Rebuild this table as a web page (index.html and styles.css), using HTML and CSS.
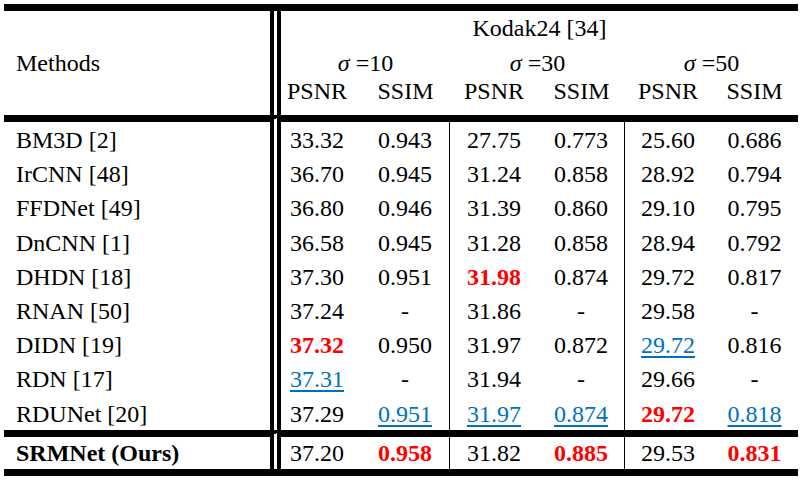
FILE: index.html
```html
<!DOCTYPE html>
<html lang="en">
<head>
<meta charset="utf-8">
<title>Kodak24 results</title>
<link rel="stylesheet" href="styles.css">
</head>
<body>
<table class="results">
  <colgroup>
    <col class="c-method">
    <col class="c-p1">
    <col class="c-s1">
    <col class="c-p2">
    <col class="c-s2">
    <col class="c-p3">
    <col class="c-s3">
  </colgroup>
  <thead>
    <tr class="h-dataset">
      <th class="method-head" rowspan="3">Methods</th>
      <th colspan="6">Kodak24 [34]</th>
    </tr>
    <tr class="h-sigma">
      <th colspan="2"><i>σ</i> =10</th>
      <th colspan="2"><i>σ</i> =30</th>
      <th colspan="2"><i>σ</i> =50</th>
    </tr>
    <tr class="h-metric">
      <th>PSNR</th><th>SSIM</th><th>PSNR</th><th>SSIM</th><th>PSNR</th><th>SSIM</th>
    </tr>
  </thead>
  <tbody>
    <tr class="first">
      <td class="name">BM3D [2]</td><td>33.32</td><td class="sep">0.943</td><td>27.75</td><td class="sep">0.773</td><td>25.60</td><td>0.686</td>
    </tr>
    <tr>
      <td class="name">IrCNN [48]</td><td>36.70</td><td class="sep">0.945</td><td>31.24</td><td class="sep">0.858</td><td>28.92</td><td>0.794</td>
    </tr>
    <tr>
      <td class="name">FFDNet [49]</td><td>36.80</td><td class="sep">0.946</td><td>31.39</td><td class="sep">0.860</td><td>29.10</td><td>0.795</td>
    </tr>
    <tr>
      <td class="name">DnCNN [1]</td><td>36.58</td><td class="sep">0.945</td><td>31.28</td><td class="sep">0.858</td><td>28.94</td><td>0.792</td>
    </tr>
    <tr>
      <td class="name">DHDN [18]</td><td>37.30</td><td class="sep">0.951</td><td><span class="best">31.98</span></td><td class="sep">0.874</td><td>29.72</td><td>0.817</td>
    </tr>
    <tr>
      <td class="name">RNAN [50]</td><td>37.24</td><td class="sep">-</td><td>31.86</td><td class="sep">-</td><td>29.58</td><td>-</td>
    </tr>
    <tr>
      <td class="name">DIDN [19]</td><td><span class="best">37.32</span></td><td class="sep">0.950</td><td>31.97</td><td class="sep">0.872</td><td><span class="second">29.72</span></td><td>0.816</td>
    </tr>
    <tr>
      <td class="name">RDN [17]</td><td><span class="second">37.31</span></td><td class="sep">-</td><td>31.94</td><td class="sep">-</td><td>29.66</td><td>-</td>
    </tr>
    <tr>
      <td class="name">RDUNet [20]</td><td>37.29</td><td class="sep"><span class="second">0.951</span></td><td><span class="second">31.97</span></td><td class="sep"><span class="second">0.874</span></td><td><span class="best">29.72</span></td><td><span class="second">0.818</span></td>
    </tr>
    <tr class="ours">
      <td class="name">SRMNet (Ours)</td><td>37.20</td><td class="sep"><span class="best">0.958</span></td><td>31.82</td><td class="sep"><span class="best">0.885</span></td><td>29.53</td><td><span class="best">0.831</span></td>
    </tr>
  </tbody>
</table>
</body>
</html>
```
FILE: styles.css
```css
html, body {
  margin: 0;
  padding: 0;
  background: #ffffff;
}

.results {
  margin: 4px 0 0 4px;
  width: 794px;
  table-layout: fixed;
  border-collapse: separate;
  border-spacing: 0;
  border-top: 7px solid #000;
  border-bottom: 7px solid #000;
  font-family: "Liberation Serif", "Times New Roman", serif;
  font-size: 24px;
  color: #000;
}

.results th,
.results td {
  box-sizing: border-box;
  padding: 0;
  font-weight: normal;
  text-align: center;
  white-space: nowrap;
}

.c-method { width: 277px; }
.c-p1 { width: 80px; }
.c-s1 { width: 89px; }
.c-p2 { width: 88px; }
.c-s2 { width: 87px; }
.c-p3 { width: 86px; }
.c-s3 { width: 87px; }

.method-head {
  text-align: left !important;
  padding-left: 12px !important;
  vertical-align: middle;
  border-right: 11px double #000;
  line-height: 30px;
}

.h-dataset th { line-height: 35px; }
.h-sigma th { line-height: 35px; }
.h-metric th {
  line-height: 20px;
  padding-bottom: 14px;
}

.h-sigma th:first-child,
.h-metric th:first-child {
  padding-right: 0;
}

.h-dataset th + th,
.h-sigma th:first-child,
.h-metric th:first-child {
  /* PSNR(σ=10) column is offset to the left of its cell */
}

.h-metric th:first-child,
.results tbody td:nth-child(2) {
  padding-right: 8px;
}

.results tbody td {
  padding-top: 3px;
  line-height: 31.2px;
}

.results tbody td.name {
  text-align: left;
  padding-left: 12px;
  border-right: 11px double #000;
}

.results tbody td.sep {
  border-right: 1px solid #000;
}

.results tbody tr.first td {
  border-top: 7px solid #000;
}

.results tbody tr.ours td {
  border-top: 7px solid #000;
  padding-top: 0;
  line-height: 32px;
}

.results tbody tr.ours td.name {
  font-weight: bold;
}

.best {
  color: #ff0000;
  font-weight: bold;
}

.second {
  color: #0070c0;
  text-decoration: underline;
  text-decoration-color: #0070c0;
  text-decoration-thickness: 2px;
  text-underline-offset: 3px;
}
```
